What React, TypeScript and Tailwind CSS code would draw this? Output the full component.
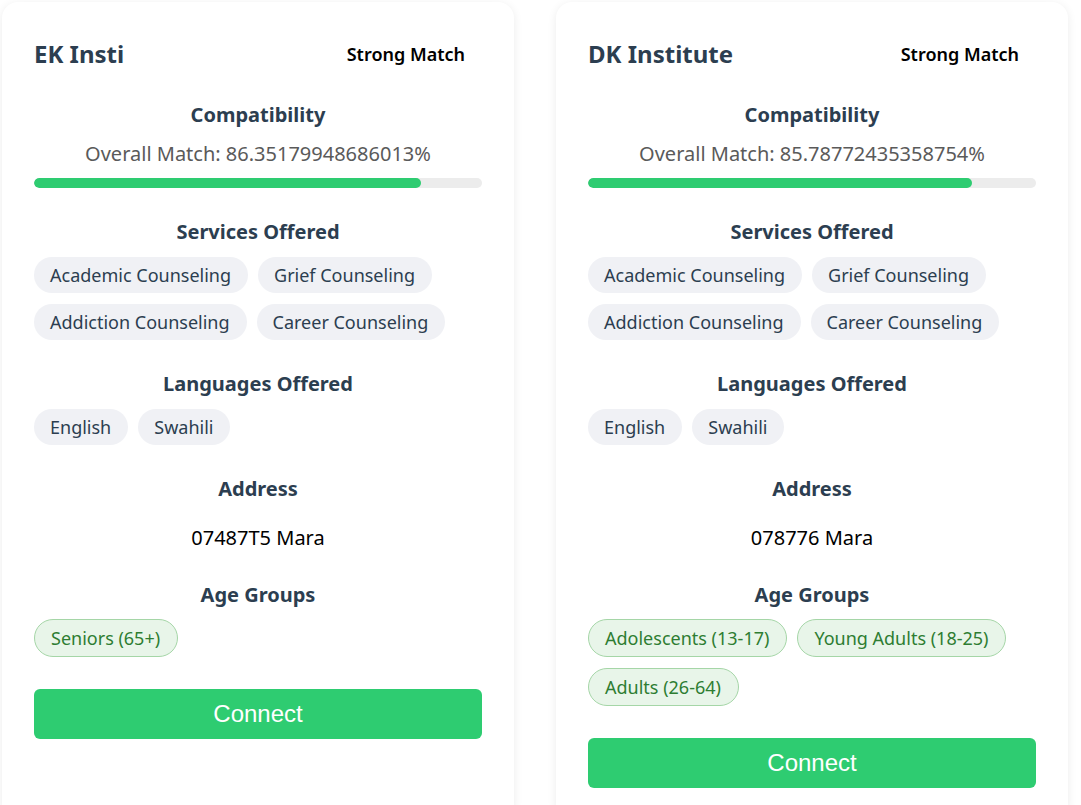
import React from "react";

interface Institution {
  name: string;
  match: string;
  services: string[];
  languages: string[];
  address: string;
  ageGroups: string[];
}

const institutions: Institution[] = [
  {
    name: "EK Insti",
    match: "86.35179948686013",
    services: ["Academic Counseling", "Grief Counseling", "Addiction Counseling", "Career Counseling"],
    languages: ["English", "Swahili"],
    address: "07487T5 Mara",
    ageGroups: ["Seniors (65+)"],
  },
  {
    name: "DK Institute",
    match: "85.78772435358754",
    services: ["Academic Counseling", "Grief Counseling", "Addiction Counseling", "Career Counseling"],
    languages: ["English", "Swahili"],
    address: "078776 Mara",
    ageGroups: ["Adolescents (13-17)", "Young Adults (18-25)", "Adults (26-64)"],
  },
];

function SectionTitle({ children }: { children: React.ReactNode }) {
  return (
    <h3 className="text-center text-[20px] leading-[28px] font-bold text-[#2c3e50] mb-[11px]">{children}</h3>
  );
}

function Card({ inst }: { inst: Institution }) {
  return (
    <div className="w-[512px] bg-white rounded-2xl shadow-[0_2px_10px_rgba(0,0,0,0.08)] px-8 pt-8 pb-8">
      {/* header */}
      <div className="flex items-center justify-between h-10">
        <h2 className="text-[24px] font-bold text-[#2c3e50]">{inst.name}</h2>
        <span className="pl-4 pr-[17px] text-[18px] font-semibold text-black">Strong Match</span>
      </div>

      {/* compatibility */}
      <div className="mt-[27px]">
        <SectionTitle>Compatibility</SectionTitle>
        <p className="text-center text-[20px] leading-[28px] text-[#5a5a5a]">
          Overall Match: {inst.match}%
        </p>
        <div className="mt-2.5 h-2.5 w-full rounded-full bg-[#ececec] overflow-hidden">
          <div className="h-full rounded-full bg-[#2ecc71]" style={{ width: `${inst.match}%` }} />
        </div>
      </div>

      <div className="mt-[30px]">
        <SectionTitle>Services Offered</SectionTitle>
        <div className="flex flex-wrap gap-x-2.5 gap-y-[11px]">
          {inst.services.map((s) => (
            <span key={s} className="pl-4 pr-[17px] py-1.5 rounded-full bg-[#f0f1f5] text-[18px] leading-6 text-[#2c3e50]">
              {s}
            </span>
          ))}
        </div>
      </div>

      <div className="mt-[30px]">
        <SectionTitle>Languages Offered</SectionTitle>
        <div className="flex flex-wrap gap-x-2.5 gap-y-[11px]">
          {inst.languages.map((l) => (
            <span key={l} className="pl-4 pr-[17px] py-1.5 rounded-full bg-[#f0f1f5] text-[18px] leading-6 text-[#2c3e50]">
              {l}
            </span>
          ))}
        </div>
      </div>

      <div className="mt-[30px]">
        <h3 className="text-center text-[20px] leading-[28px] font-bold text-[#2c3e50]">Address</h3>
        <p className="mt-[21px] text-center text-[20px] leading-[28px] text-black">{inst.address}</p>
      </div>

      <div className="mt-[29px]">
        <SectionTitle>Age Groups</SectionTitle>
        <div className="flex flex-wrap gap-x-2.5 gap-y-[11px] -mt-[1px]">
          {inst.ageGroups.map((a) => (
            <span
              key={a}
              className="pl-4 pr-[17px] py-1.5 rounded-full bg-[#e8f5e9] border border-[#a5d6a7] text-[18px] leading-6 text-[#2e7d32]"
            >
              {a}
            </span>
          ))}
        </div>
      </div>

      <button className="mt-8 w-full h-[50px] rounded-md bg-[#2ecc71] text-white text-[24px] font-['Liberation_Sans',Arial,sans-serif]">
        Connect
      </button>
    </div>
  );
}

export default function App() {
  return (
    <main className="min-h-screen bg-white pl-[2px] pt-[2px] font-['Noto_Sans',sans-serif]">
      <div className="flex items-stretch gap-[42px]">
        {institutions.map((inst) => (
          <Card key={inst.name} inst={inst} />
        ))}
      </div>
    </main>
  );
}
